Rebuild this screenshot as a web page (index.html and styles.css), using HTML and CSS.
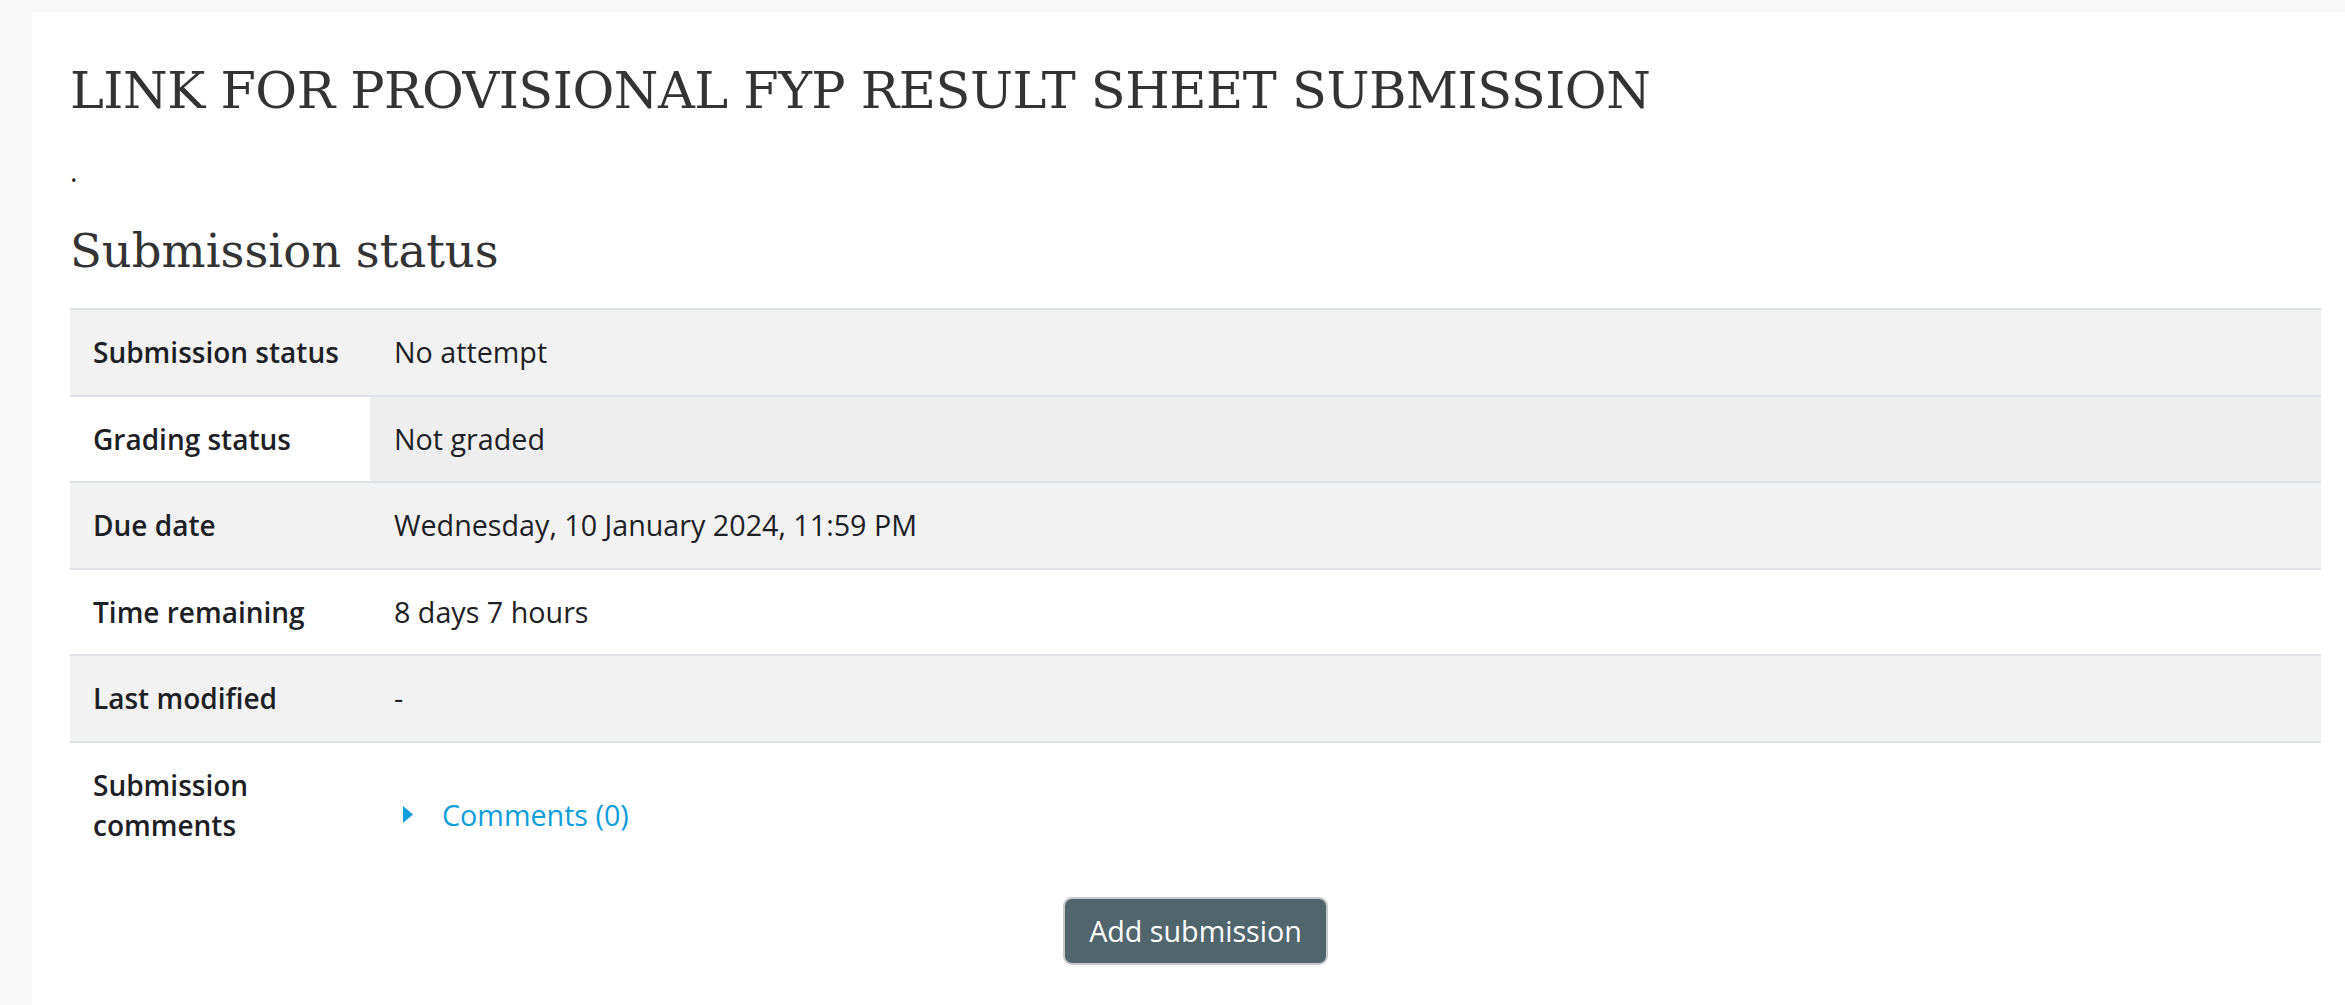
FILE: index.html
```html
<!DOCTYPE html>
<html lang="en">
<head>
<meta charset="utf-8">
<title>LINK FOR PROVISIONAL FYP RESULT SHEET SUBMISSION</title>
<link rel="stylesheet" href="styles.css">
</head>
<body>
<div class="page">
  <main class="card">
    <h2 class="title">LINK FOR PROVISIONAL FYP RESULT SHEET SUBMISSION</h2>
    <p class="intro">.</p>
    <h3 class="section-title">Submission status</h3>
    <table class="status-table">
      <tbody>
        <tr class="striped">
          <th>Submission status</th>
          <td>No attempt</td>
        </tr>
        <tr>
          <th>Grading status</th>
          <td class="notgraded">Not graded</td>
        </tr>
        <tr class="striped">
          <th>Due date</th>
          <td>Wednesday, 10 January 2024, 11:59 PM</td>
        </tr>
        <tr>
          <th>Time remaining</th>
          <td>8 days 7 hours</td>
        </tr>
        <tr class="striped">
          <th>Last modified</th>
          <td>-</td>
        </tr>
        <tr class="last">
          <th>Submission<br>comments</th>
          <td class="comments-cell">
            <div class="comments">
              <svg class="caret" width="10" height="17" viewBox="0 0 10 17" aria-hidden="true"><polygon points="0,0 10,8.5 0,17" fill="#0d9ddb"/></svg>
              <a href="#" class="comments-link">Comments (0)</a>
            </div>
          </td>
        </tr>
      </tbody>
    </table>
    <div class="actions">
      <button type="button" class="btn">Add submission</button>
    </div>
  </main>
</div>
</body>
</html>
```
FILE: styles.css
```css
html, body {
  margin: 0;
  padding: 0;
}
body {
  background: #f8f8f8;
  font-family: "Open Sans", "Noto Sans", sans-serif;
  color: #1d2125;
  font-size: 28.7px;
  line-height: 40px;
}
.page {
  padding: 12px 0 0 32px;
}
.card {
  background: #ffffff;
  padding: 49px 24px 40px 38px;
  min-height: 904px;
}
.title {
  margin: 0 0 30px;
  font-family: "DejaVu Serif", serif;
  font-weight: 400;
  font-size: 51px;
  line-height: 60px;
  letter-spacing: -0.5px;
  color: #333333;
}
.intro {
  margin: 0 0 33px;
}
.section-title {
  margin: 0 0 29px;
  font-family: "DejaVu Serif", serif;
  font-weight: 400;
  font-size: 46.5px;
  line-height: 55px;
  color: #333333;
}
.status-table {
  width: 100%;
  border-collapse: collapse;
}
.status-table th,
.status-table td {
  border-top: 2px solid #dee2e6;
  padding: 22px 23px 22.6px;
  text-align: left;
  vertical-align: top;
}
.status-table th {
  width: 254px;
  font-weight: 600;
  font-size: 28px;
}
.status-table td {
  padding-left: 24px;
}
.striped th,
.striped td {
  background: #f2f2f2;
}
.notgraded {
  background: #eeeeee;
}
.status-table .comments-cell {
  vertical-align: middle;
}
.comments {
  display: flex;
  align-items: center;
  padding-top: 20px;
  height: 40px;
}
.caret {
  margin-left: 9px;
  margin-right: 29px;
  flex: none;
}
.comments-link {
  color: #0d9ddb;
  text-decoration: none;
}
.actions {
  margin-top: 29px;
  text-align: center;
}
.btn {
  font-family: "Open Sans", "Noto Sans", sans-serif;
  font-size: 28.7px;
  line-height: 40px;
  color: #ffffff;
  background: #51656d;
  border: 2px solid #c6cacc;
  border-radius: 9px;
  padding: 12px 24px;
}
```
